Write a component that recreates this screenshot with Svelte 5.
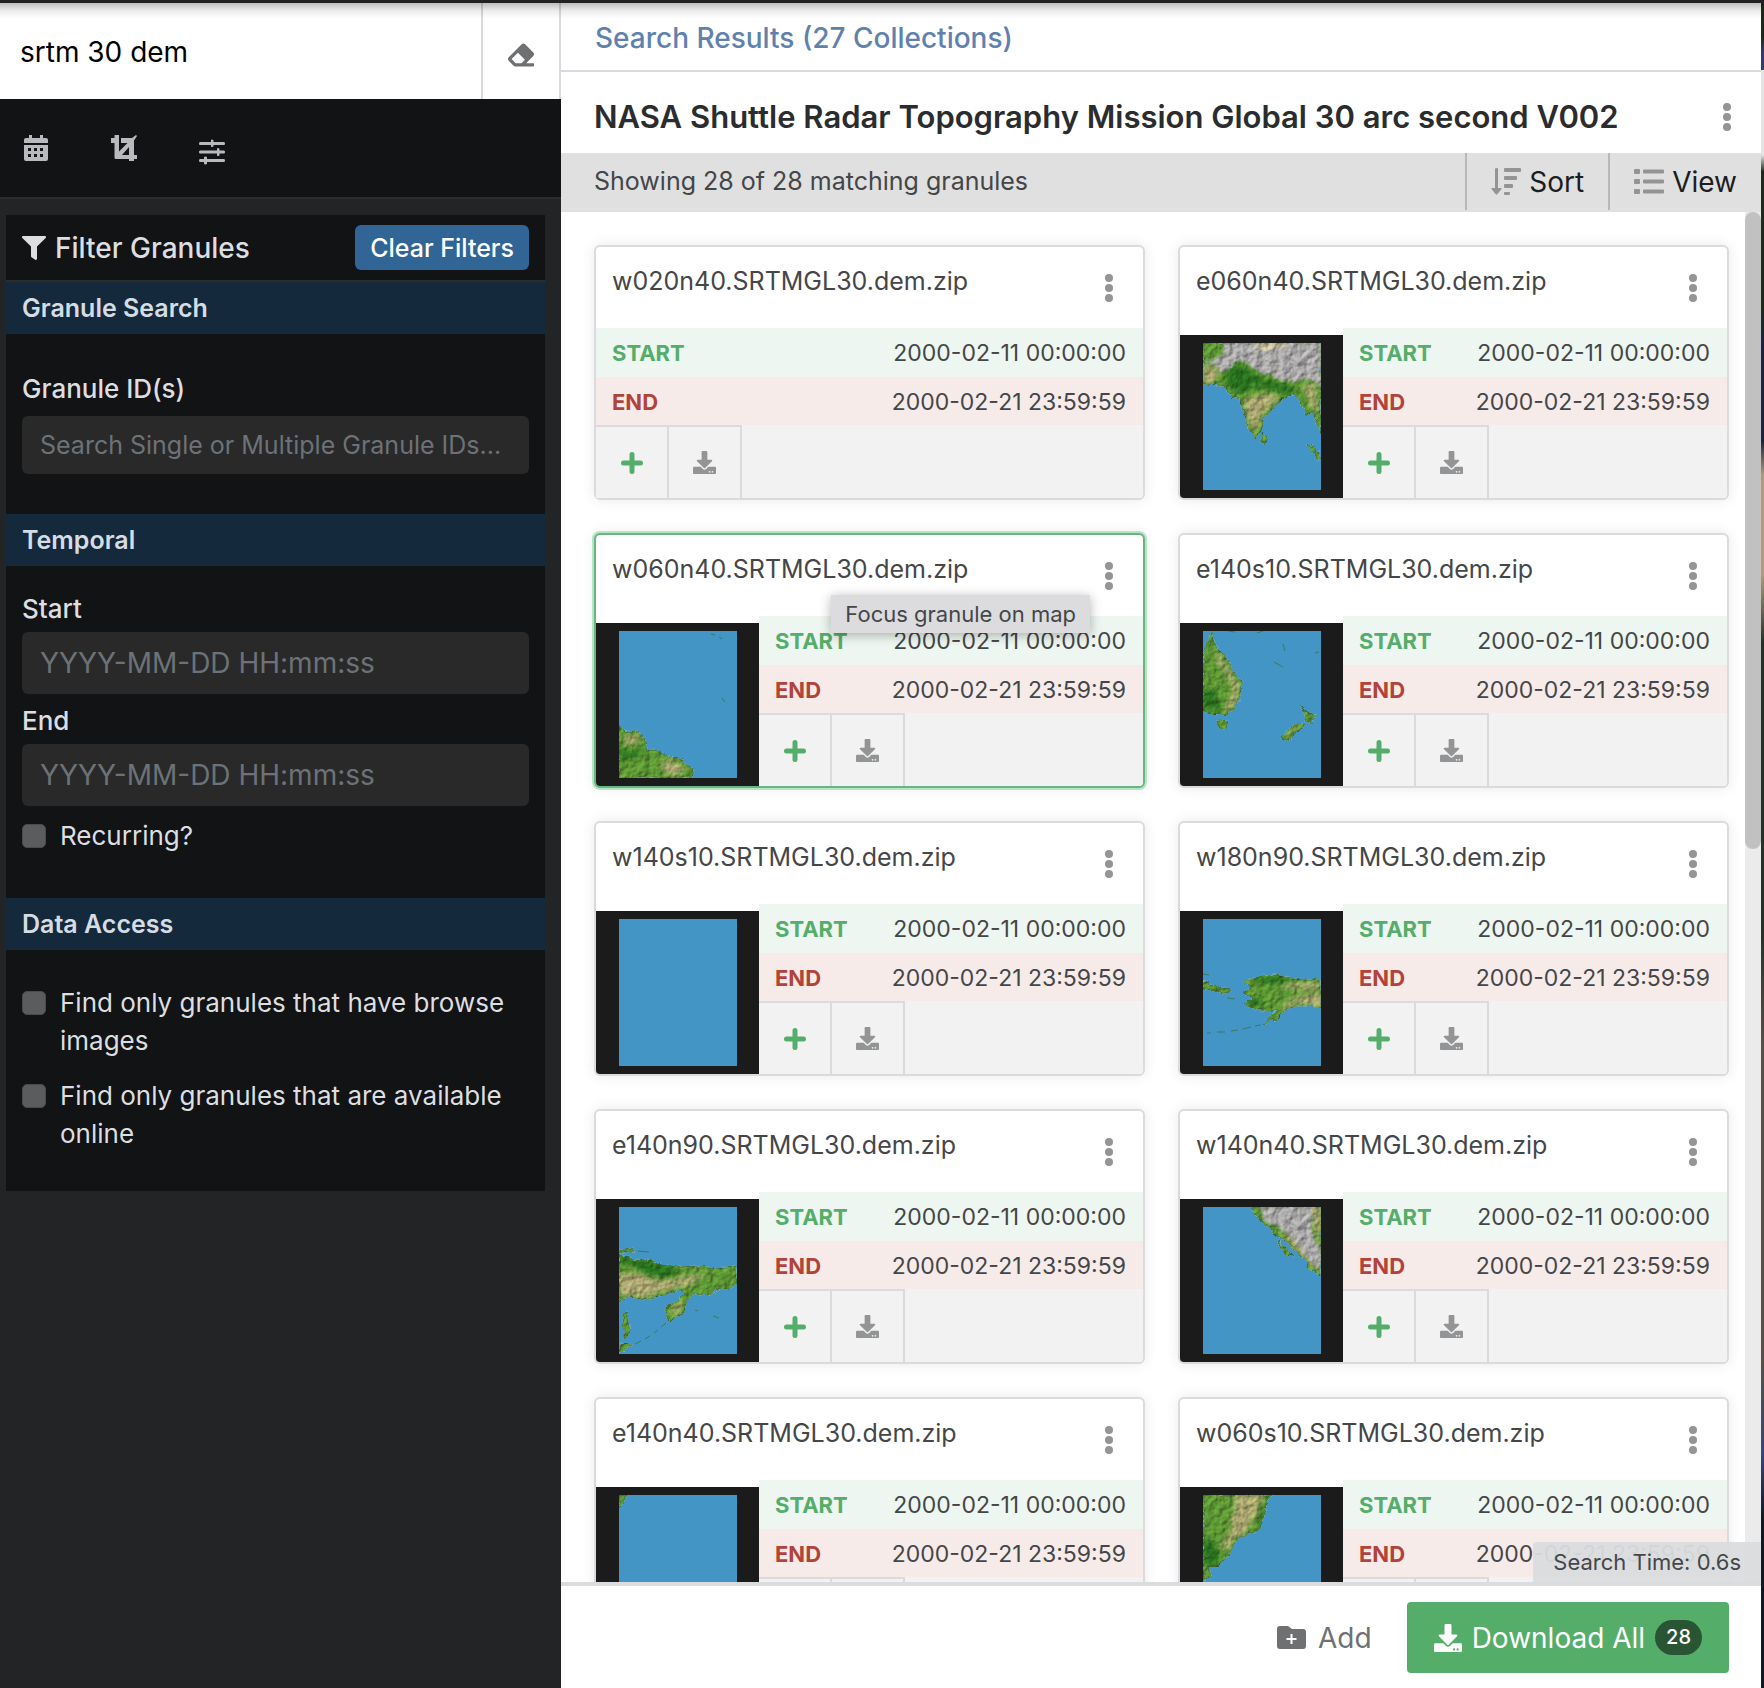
<script>
  const START = '2000-02-11 00:00:00';
  const END = '2000-02-21 23:59:59';

  const granules = [
    { id: 'w020n40' },
    {
      id: 'e060n40',
      land: 'M0 0H118V92L115 82L110 69L103 72L98 58L92 51L80 55L70 66L60 75L58 89L52 95L47 86L40 70L38 55L30 56L23 47L19 42L0 41ZM59 90L64 95L62 101L58 98ZM104 101L112 106L119 116L116 118Z',
      dark: 'M22 30L34 20L60 36L95 44L86 52L70 47L50 42L40 52L26 46Z',
      tan: 'M42 55L70 50L74 58L60 70L52 90L47 82L42 68ZM0 22L18 26L10 40L0 40ZM100 40L112 42L116 72L106 60Z',
      rock: 'M20 0H118V44L105 35L92 39L72 35L52 26L36 16L28 26L18 30L12 22L2 18L20 12Z',
      sand: 'M48 0H88L76 5L60 8Z'
    },
    {
      id: 'w060n40',
      hover: true,
      land: 'M0 93L6 100L18 101L25 107L28 118L40 120L50 126L62 127L70 134L74 142L71 147H0Z',
      dark: 'M0 120L28 118L18 125L0 130Z',
      tan: 'M4 106L18 104L22 110L8 114ZM42 130L58 130L66 138L58 145L46 142Z',
      isles: 'M92 3L96 4M100 6L103 8M103 67L106 71'
    },
    {
      id: 'e140s10',
      land: 'M0 22L5 12L8 2L11 10L14 17L20 23L24 30L32 42L38 50L39 58L36 68L30 80L20 84L10 82L0 80ZM14 90L25 89L23 98L17 98ZM97 73L102 78L106 82L113 83L108 92L102 91L103 84ZM97 91L101 94L90 105L83 109L78 106L86 99L92 95Z',
      dark: 'M0 58L14 62L18 78L6 80L0 76Z',
      tan: 'M12 18L16 24L26 38L36 56L34 68L26 82L22 80L30 60L24 44L14 30ZM98 92L90 102L82 107L88 100Z',
      isles: 'M80 13L82 20M71 31L80 36M112 22L116 21M25 0L32 1M54 2L60 0'
    },
    { id: 'w140s10' },
    {
      id: 'w180n90',
      land: 'M0 62L8 65L20 69L28 71L25 75L12 72L0 69ZM42 63L50 59L70 56L90 59L118 61V90L105 86L92 86L82 91L74 99L60 105L74 92L60 91L52 90L42 85L50 79L39 74L48 70Z',
      dark: 'M50 60L72 57L94 62L76 65L54 64ZM42 80L56 80L60 88L46 86Z',
      tan: 'M74 68L92 64L118 64L116 70L92 70ZM84 82L100 76L118 74V90L104 85L92 84L76 94Z',
      isles: 'M0 55L6 56M24 79L32 80M58 106L52 107M48 108L40 110M35 111L28 112M22 113L14 113M8 114L4 114'
    },
    {
      id: 'e140n90',
      land: 'M0 47L10 51L25 53L40 57L60 60L80 59L95 61L118 59V76L112 81L100 83L90 87L76 87L68 93L66 105L55 110L50 115L46 105L50 98L58 93L67 86L60 83L45 88L25 92L8 90L0 95ZM0 43L14 42V45L0 46ZM4 107L8 106L10 118L9 129L5 130ZM2 137L14 138L6 142L0 146Z',
      dark: 'M0 48L24 53L52 60L62 66L44 72L26 68L14 58L0 56Z',
      tan: 'M0 66L20 66L40 74L66 70L90 66L70 78L44 84L20 90L0 88ZM54 98L64 92L60 104L52 110Z',
      isles: 'M19 44L30 45M16 137L22 134M26 132L31 129M35 126L39 123M42 120L47 116M76 103L79 104M94 109L100 111'
    },
    {
      id: 'w140n40',
      land: 'M48 0L53 8L60 16L68 20L72 30L80 31L88 38L96 47L103 55L104 60L112 65L118 69V0ZM75 34L80 38L85 45L90 50L84 48L78 41Z',
      tan: 'M76 26L96 28L112 44L118 66L104 54L88 36ZM106 0H118V40L112 22Z',
      rock: 'M56 0H110L108 20L112 34L118 44V62L106 54L98 42L84 26L72 18L62 14Z'
    },
    { id: 'e140n40', land: 'M0 0H7L5 5L2 12L0 14Z' },
    {
      id: 'w060s10',
      land: 'M0 0H70L64 8L60 20L57 33L50 38L38 42L32 50L27 58L20 66L14 72L5 72L8 80L3 85L0 85Z',
      dark: 'M0 44L14 50L18 64L8 72L0 66ZM66 0H70L60 20L56 34L54 28Z',
      tan: 'M32 0H60L52 22L44 36L32 42L24 56L18 50L28 36L30 20Z'
    }
  ];

  let keyword = 'srtm 30 dem';
</script>

{#snippet kebab()}
  <svg class="kebab" viewBox="0 0 8 28" aria-hidden="true">
    <circle cx="4" cy="4" r="4" /><circle cx="4" cy="14" r="4" /><circle cx="4" cy="24" r="4" />
  </svg>
{/snippet}

{#snippet download()}
  <svg class="dl" viewBox="0 0 512 512" aria-hidden="true">
    <path d="M216 0h80c13.300 0 24 10.700 24 24v168h87.700c17.800 0 26.700 21.500 14.100 34.100L269.700 378.300c-7.500 7.500-19.800 7.500-27.300 0L90.100 226.100c-12.600-12.600-3.700-34.100 14.100-34.100H192V24c0-13.300 10.700-24 24-24zm296 376v112c0 13.300-10.700 24-24 24H24c-13.300 0-24-10.700-24-24V376c0-13.300 10.700-24 24-24h146.700l49 49c20.100 20.100 52.500 20.100 72.600 0l49-49H488c13.300 0 24 10.700 24 24zm-124 88c0-11-9-20-20-20s-20 9-20 20 9 20 20 20 20-9 20-20zm64 0c0-11-9-20-20-20s-20 9-20 20 9 20 20 20 20-9 20-20z" />
  </svg>
{/snippet}

<svg class="defs" width="0" height="0" aria-hidden="true">
  <defs>
    <filter id="coast" x="-5%" y="-5%" width="110%" height="110%" color-interpolation-filters="sRGB">
      <feTurbulence type="fractalNoise" baseFrequency="0.14" numOctaves="3" seed="4" result="n" />
      <feDisplacementMap in="SourceGraphic" in2="n" scale="6" xChannelSelector="R" yChannelSelector="G" result="d" />
      <feDiffuseLighting in="n" surfaceScale="1.500" lighting-color="#ffffff" result="l"><feDistantLight azimuth="225" elevation="55" /></feDiffuseLighting>
      <feComposite in="l" in2="d" operator="in" result="lt" />
      <feBlend in="lt" in2="d" mode="multiply" result="b" />
      <feComponentTransfer in="b"><feFuncR type="linear" slope="1.2" /><feFuncG type="linear" slope="1.2" /><feFuncB type="linear" slope="1.2" /></feComponentTransfer>
    </filter>
    <filter id="soft" x="-20%" y="-20%" width="140%" height="140%" color-interpolation-filters="sRGB"><feGaussianBlur stdDeviation="2.500" /></filter>
    <filter id="crisp" x="-20%" y="-20%" width="140%" height="140%" color-interpolation-filters="sRGB"><feGaussianBlur stdDeviation="1" /></filter>
  </defs>
</svg>

<div class="app">
  <div class="topstrip"></div>
  <div class="columns">
    <aside class="sidebar">
      <form class="search" onsubmit={(e) => e.preventDefault()}>
        <input type="text" aria-label="Search collections" bind:value={keyword} />
        <button type="button" aria-label="Clear search">
          <svg class="i26" viewBox="0 0 512 512" aria-hidden="true"><path d="M497.941 273.941c18.745-18.745 18.745-49.137 0-67.882l-160-160c-18.745-18.745-49.136-18.746-67.883 0l-256 256c-18.745 18.745-18.745 49.137 0 67.882l96 96A48.004 48.004 0 0 0 144 480h356c6.627 0 12-5.373 12-12v-40c0-6.627-5.373-12-12-12H355.883l142.058-142.059zm-302.627-62.627l137.373 137.373L265.373 416H150.628l-80-80 124.686-124.686z" /></svg>
        </button>
      </form>
      <div class="tools">
        <button type="button" aria-label="Temporal filter">
          <svg class="i26" viewBox="0 0 26 26" aria-hidden="true"><path fill-rule="evenodd" d="M6 0h3v3h8V0h3v3h3q2 0 2 2v3H1V5q0-2 2-2h3zM1 10h24v14q0 2-2 2H3q-2 0-2-2zM5 13v3h3v-3zm6 0v3h3v-3zm6 0v3h3v-3zM5 19v3h3v-3zm6 0v3h3v-3zm6 0v3h3v-3z" /></svg>
        </button>
        <button type="button" aria-label="Spatial filter">
          <svg class="i26" viewBox="0 0 26 26" aria-hidden="true"><path d="M3.500 0H8v16.500L16.500 8H10V3h11l4-3 1 1-3 4.500V20h3v4h-3v2h-5v-2H5q-1.500 0-1.500-1.500V8H0V3h3.500zM11 20h7v-8z" /></svg>
        </button>
        <button type="button" aria-label="Advanced search">
          <svg class="i26 low" viewBox="0 0 26 26" aria-hidden="true"><path d="M1 3h11V1.500q0-1 1-1t1.500 1V3H25q1 0 1 1.500T25 6H14.500v1q0 1-1.500 1t-1-1V6H1Q0 6 0 4.500T1 3zM1 11.500h17V10q0-1 1-1t1.500 1v1.500H25q1 0 1 1.500t-1 1.500h-4.500V16q0 1-1.500 1t-1-1v-1.500H1q-1 0-1-1.500t1-1.500zM1 20h4v-1.500q0-1 1.500-1t1.500 1V20h17q1 0 1 1.500T25 23H8v1.500q0 1-1.500 1t-1.500-1V23H1q-1 0-1-1.500T1 20z" /></svg>
        </button>
      </div>
      <section class="filters">
        <header>
          <svg class="funnel" viewBox="0 0 512 512" aria-hidden="true"><path d="M487.976 0H24.028C2.710 0-8.047 25.866 7.058 40.971L192 225.941V432c0 7.831 3.821 15.170 10.237 19.662l80 55.980C298.020 518.690 320 507.493 320 487.980V225.941l184.947-184.970C520.021 25.896 509.338 0 487.976 0z" /></svg>
          <h2>Filter Granules</h2>
          <button type="button" class="clear">Clear Filters</button>
        </header>
        <h3>Granule Search</h3>
        <div class="group ids">
          <label for="ids">Granule ID(s)</label>
          <input id="ids" type="text" placeholder="Search Single or Multiple Granule IDs..." />
        </div>
        <h3>Temporal</h3>
        <div class="group dates">
          <label for="start">Start</label>
          <input id="start" class="date" type="text" placeholder="YYYY-MM-DD HH:mm:ss" />
          <label for="end">End</label>
          <input id="end" class="date" type="text" placeholder="YYYY-MM-DD HH:mm:ss" />
          <div class="check"><input id="rec" type="checkbox" /><label for="rec">Recurring?</label></div>
        </div>
        <h3>Data Access</h3>
        <div class="group access">
          <div class="check"><input id="browse" type="checkbox" /><label for="browse">Find only granules that have browse images</label></div>
          <div class="check"><input id="online" type="checkbox" /><label for="online">Find only granules that are available online</label></div>
        </div>
      </section>
    </aside>

    <main>
      <nav><a href="#collections">Search Results (27 Collections)</a></nav>
      <div class="heading">
        <h1>NASA Shuttle Radar Topography Mission Global 30 arc second V002</h1>
        <button type="button" aria-label="Collection actions">{@render kebab()}</button>
      </div>
      <div class="status">
        <p>Showing 28 of 28 matching granules</p>
        <button type="button">
          <svg class="i30" viewBox="0 0 30 28" aria-hidden="true"><path d="M4 1q0-1 1.500-1T7 1v19h3q1 0 .5 1l-4 5q-1 1-2 0l-4-5Q0 20 1 20h3zM14 0h15q1 0 1 1v2q0 1-1 1H14q-1 0-1-1V1q0-1 1-1zM14 8h11q1 0 1 1v2q0 1-1 1H14q-1 0-1-1V9q0-1 1-1zM14 16h7q1 0 1 1v2q0 1-1 1h-7q-1 0-1-1v-2q0-1 1-1zM14 24h4q1 0 1 1v1q0 1-1 1h-4q-1 0-1-1v-1q0-1 1-1z" /></svg>
          Sort
        </button>
        <button type="button">
          <svg class="i30" viewBox="0 0 30 28" aria-hidden="true"><path d="M1 1h4q1 0 1 1v3q0 1-1 1H1q-1 0-1-1V2q0-1 1-1zM1 11h4q1 0 1 1v3q0 1-1 1H1q-1 0-1-1v-3q0-1 1-1zM1 21h4q1 0 1 1v3q0 1-1 1H1q-1 0-1-1v-3q0-1 1-1zM10 1.500h19q1 0 1 1v2q0 1-1 1H10q-1 0-1-1v-2q0-1 1-1zM10 11.500h19q1 0 1 1v2q0 1-1 1H10q-1 0-1-1v-2q0-1 1-1zM10 21.500h19q1 0 1 1v2q0 1-1 1H10q-1 0-1-1v-2q0-1 1-1z" /></svg>
          View
        </button>
      </div>

      <div class="scroller">
        <ul class="grid">
          {#each granules as g, i}
            <li class="card" class:hover={g.hover}>
              <div class="cardhead">
                <h4>{g.id}.SRTMGL30.dem.zip</h4>
                <button type="button" aria-label="Granule actions">{@render kebab()}</button>
              </div>
              {#if g.hover}<span class="tip" role="tooltip">Focus granule on map</span>{/if}
              <div class="cardbody">
                {#if i > 0}
                  <div class="thumb">
                    <svg viewBox="0 0 118 147" role="img" aria-label="Browse image">
                      <rect width="118" height="147" fill="#4295c4" />
                      {#if g.land}
                        <clipPath id="land-{g.id}"><path d={g.land} /></clipPath>
                        <g filter="url(#coast)">
                          <path d={g.land} fill="#5f9a35" stroke="#3f6f45" stroke-width="1" />
                          <g clip-path="url(#land-{g.id})">
                            {#if g.dark}<path d={g.dark} fill="#2a7420" filter="url(#soft)" />{/if}
                            {#if g.tan}<path d={g.tan} fill="#b0aa74" filter="url(#soft)" />{/if}
                            {#if g.rock}<path d={g.rock} fill="#adabab" filter="url(#crisp)" />{/if}
                            {#if g.sand}<path d={g.sand} fill="#c9c29c" filter="url(#crisp)" />{/if}
                          </g>
                        </g>
                      {/if}
                      {#if g.isles}<path d={g.isles} fill="none" stroke="#3c7a5c" stroke-width="1" />{/if}
                    </svg>
                  </div>
                {/if}
                <div class="info">
                  <dl>
                    <div class="row start"><dt>START</dt><dd>{START}</dd></div>
                    <div class="row end"><dt>END</dt><dd>{END}</dd></div>
                  </dl>
                  <div class="actions">
                    <button type="button" aria-label="Add granule">
                      <svg class="plus" viewBox="0 0 22 22" aria-hidden="true"><path d="M11 2.500V19.500M2.500 11H19.500" /></svg>
                    </button>
                    <button type="button" aria-label="Download granule">{@render download()}</button>
                  </div>
                </div>
              </div>
            </li>
          {/each}
        </ul>
        <div class="track"><div class="handle"></div></div>
        <div class="time">Search Time: 0.6s</div>
      </div>

      <footer>
        <button type="button" class="add">
          <svg class="folder" viewBox="0 0 29 23" aria-hidden="true"><path fill-rule="evenodd" d="M3 0h8l4 3h11q3 0 3 3v14q0 3-3 3H3q-3 0-3-3V3q0-3 3-3zM13.500 8v4h-4v2h4v4h2v-4h4v-2h-4V8z" /></svg>
          Add
        </button>
        <button type="button" class="all">{@render download()}Download All<span class="badge">28</span></button>
      </footer>
    </main>
    <div class="map"></div>
  </div>
</div>

<style>
  :global(body) { margin: 0; background: #222426; }
  * { box-sizing: border-box; }
  h1, h2, h3, h4, p, ul, dl, dd { margin: 0; padding: 0; }
  button { border: 0; padding: 0; background: none; font: inherit; color: inherit; cursor: pointer; }
  input { font: inherit; }
  svg { display: block; flex: none; fill: currentColor; }
  .defs { position: absolute; }
  .i26 { width: 26px; height: 26px; }
  .i30 { width: 30px; height: 28px; }

  .app { display: flex; flex-direction: column; height: 100vh; overflow: hidden; font-family: Inter, "Liberation Sans", sans-serif; font-size: 26px; line-height: 38px; color: #444648; }
  .topstrip { position: relative; flex: none; height: 3px; background: #202123; z-index: 5; }
  .topstrip::after { content: ""; position: absolute; top: 100%; left: 0; right: 0; height: 16px; background: linear-gradient(rgba(0, 0, 0, .26), rgba(0, 0, 0, .07) 50%, transparent); pointer-events: none; }
  .columns { flex: 1; min-height: 0; display: flex; }

  .sidebar { flex: none; width: 561px; background: #222426; color: #dcdee0; }
  .search { display: flex; height: 96px; background: #fff; border-right: 2px solid #d9dadd; }
  .search input { flex: 1; min-width: 0; border: 0; outline: 0; padding: 2px 20px 0; font-size: 28px; color: #000; background: none; }
  .search button { width: 78px; display: grid; place-items: center; padding-top: 8px; border-left: 2px solid #d9dadd; color: #6f7072; }
  .tools { display: flex; gap: 62px; align-items: center; height: 100px; padding: 0 23px; background: #111314; border-bottom: 2px solid #2b2d2f; color: #b9babe; }
  .low { margin-top: 8px; }
  .filters { margin: 16px 16px 0 6px; background: #111314; }
  .filters header { display: flex; align-items: center; gap: 9px; padding: 10px 16px; height: 67px; border-bottom: 2px solid #2b2d2f; }
  .funnel { width: 24px; height: 24px; }
  h2 { flex: 1; font-size: 28px; font-weight: 500; }
  .clear { height: 45px; padding: 0 15px; border-radius: 6px; background: #306595; color: #fff; font-weight: 500; font-size: 25px; }
  h3 { padding: 6px 16px; line-height: 40px; font-size: 25px; font-weight: 600; background: #15293c; color: #d5dde4; }
  .group { display: flex; flex-direction: column; padding: 0 16px; }
  .group > label { font-weight: 500; }
  .group > input { height: 58px; padding: 0 18px; border: 0; border-radius: 6px; background: #292929; color: #dcdee0; font-size: 25px; }
  .group > .date { height: 62px; font-size: 28px; }
  .group input::placeholder { color: #6c7278; opacity: 1; }
  .ids { gap: 8px; padding-top: 36px; padding-bottom: 40px; }
  .dates { gap: 4px; padding-top: 24px; padding-bottom: 43px; }
  .date { margin-bottom: 4px; }
  .dates .check { margin-top: 3px; }
  .access { gap: 17px; padding-top: 34px; padding-bottom: 38px; }
  .check { display: flex; gap: 14px; align-items: flex-start; }
  .check input { appearance: none; flex: none; width: 24px; height: 24px; margin: 7px 0 0; border-radius: 5px; background: #5b5c5e; border: 1px solid #4a4b4d; }

  main { flex: 1; min-width: 0; display: flex; flex-direction: column; background: #fff; }
  nav { padding: 16px 34px 13px; border-bottom: 2px solid #d9dadd; }
  nav a { display: block; color: #5f82ad; font-size: 28px; font-weight: 500; text-decoration: none; }
  .heading { display: flex; justify-content: space-between; align-items: center; height: 81px; padding: 9px 30px 0 33px; }
  h1 { font-size: 31px; font-weight: 600; color: #2b2c2e; white-space: nowrap; }
  .kebab { width: 8px; height: 28px; fill: #929496; }
  .status { display: flex; height: 59px; background: #e0e0e0; }
  .status p { flex: 1; padding: 9px 33px; font-size: 25px; }
  .status button { display: flex; align-items: center; gap: 8px; height: 57px; padding: 0 24px; border-left: 2px solid #b7b8ba; font-size: 28px; color: #1c1d1f; }
  .status svg { color: #929496; }

  .scroller { position: relative; flex: 1; min-height: 0; display: flex; overflow: hidden; }
  .grid { flex: 1; min-width: 0; list-style: none; display: grid; grid-template-columns: 1fr 1fr; gap: 33px; align-content: start; padding: 33px 16px 0 33px; }
  .card { position: relative; border: 2px solid #dadbdf; border-radius: 6px; box-shadow: 0 0 14px rgba(0, 0, 0, .09); background: #fff; }
  .hover { border-color: #69b480; box-shadow: 0 0 0 2px #b4e6c4, 0 0 14px rgba(0, 0, 0, .09); }
  .cardhead { display: flex; justify-content: space-between; align-items: flex-start; height: 81px; padding: 15px 30px 0 16px; }
  .cardhead button { padding-top: 12px; }
  h4 { font-size: 25px; font-weight: 400; }
  .cardbody { display: flex; align-items: flex-end; }
  .thumb { flex: none; width: 163px; height: 163px; display: grid; place-items: center; background: #1b1b1b; border-bottom-left-radius: 4px; }
  .thumb svg { width: 118px; height: 147px; overflow: hidden; }
  .info { flex: 1; min-width: 0; }
  .row { display: flex; justify-content: space-between; padding: 6px 17px 4px 16px; font-size: 22px; }
  .start { background: #edf6f0; padding-bottom: 5px; }
  .end { background: #f7ebe9; }
  dt { font-weight: 700; }
  dd { font-size: 23px; }
  .start dt { color: #55ad6a; }
  .end dt { color: #b1443a; }
  .actions { display: flex; height: 73px; background: #f2f2f2; border-bottom-right-radius: 4px; }
  .actions button { width: 73px; display: grid; place-items: center; border-top: 2px solid #dadbdf; border-right: 2px solid #dadbdf; color: #929496; }
  .plus { width: 22px; height: 22px; fill: none; stroke: #55ad6a; stroke-width: 5; stroke-linecap: round; }
  .dl { width: 23px; height: 23px; }
  .tip { position: absolute; right: 53px; top: 60px; z-index: 2; padding: 0 14px; font-size: 22px; background: #dcdcde; box-shadow: 0 2px 12px rgba(0, 0, 0, .3); }

  .track { flex: none; width: 16px; display: grid; grid-template-rows: 20fr 23fr; background: #ebebeb; }
  .handle { border-radius: 8px; background: #c1c1c1; }
  .time { position: absolute; right: 0; bottom: 0; padding: 1px 20px; font-size: 22px; background: rgba(218, 220, 222, .95); border-top-left-radius: 4px; }

  footer { flex: none; display: flex; justify-content: flex-end; align-items: center; gap: 35px; padding: 16px 32px 15px; border-top: 4px solid #dadcdf; font-size: 28px; }
  .add { display: flex; align-items: center; gap: 12px; color: #6f7072; }
  .folder { width: 29px; height: 23px; }
  .all { display: flex; align-items: center; gap: 10px; height: 71px; padding: 0 27px; border-radius: 4px; background: #55ad6a; color: #fff; }
  .all .dl { width: 28px; height: 28px; }
  .badge { padding: 0 11px; line-height: 35px; border-radius: 18px; background: #2a5535; font-size: 20px; font-weight: 500; }
  .map { flex: none; width: 3px; background: linear-gradient(#1c2a1c 0 2%, #2c3f70 3% 4%, #e4e4e4 4% 9%, #1e2a1c 10% 18%, #172544 20% 26%, #b39870 28% 34%, #26331f 38% 55%, #5d5240 62% 80%, #2f4a80 86%, #10172a 90%); }
</style>
